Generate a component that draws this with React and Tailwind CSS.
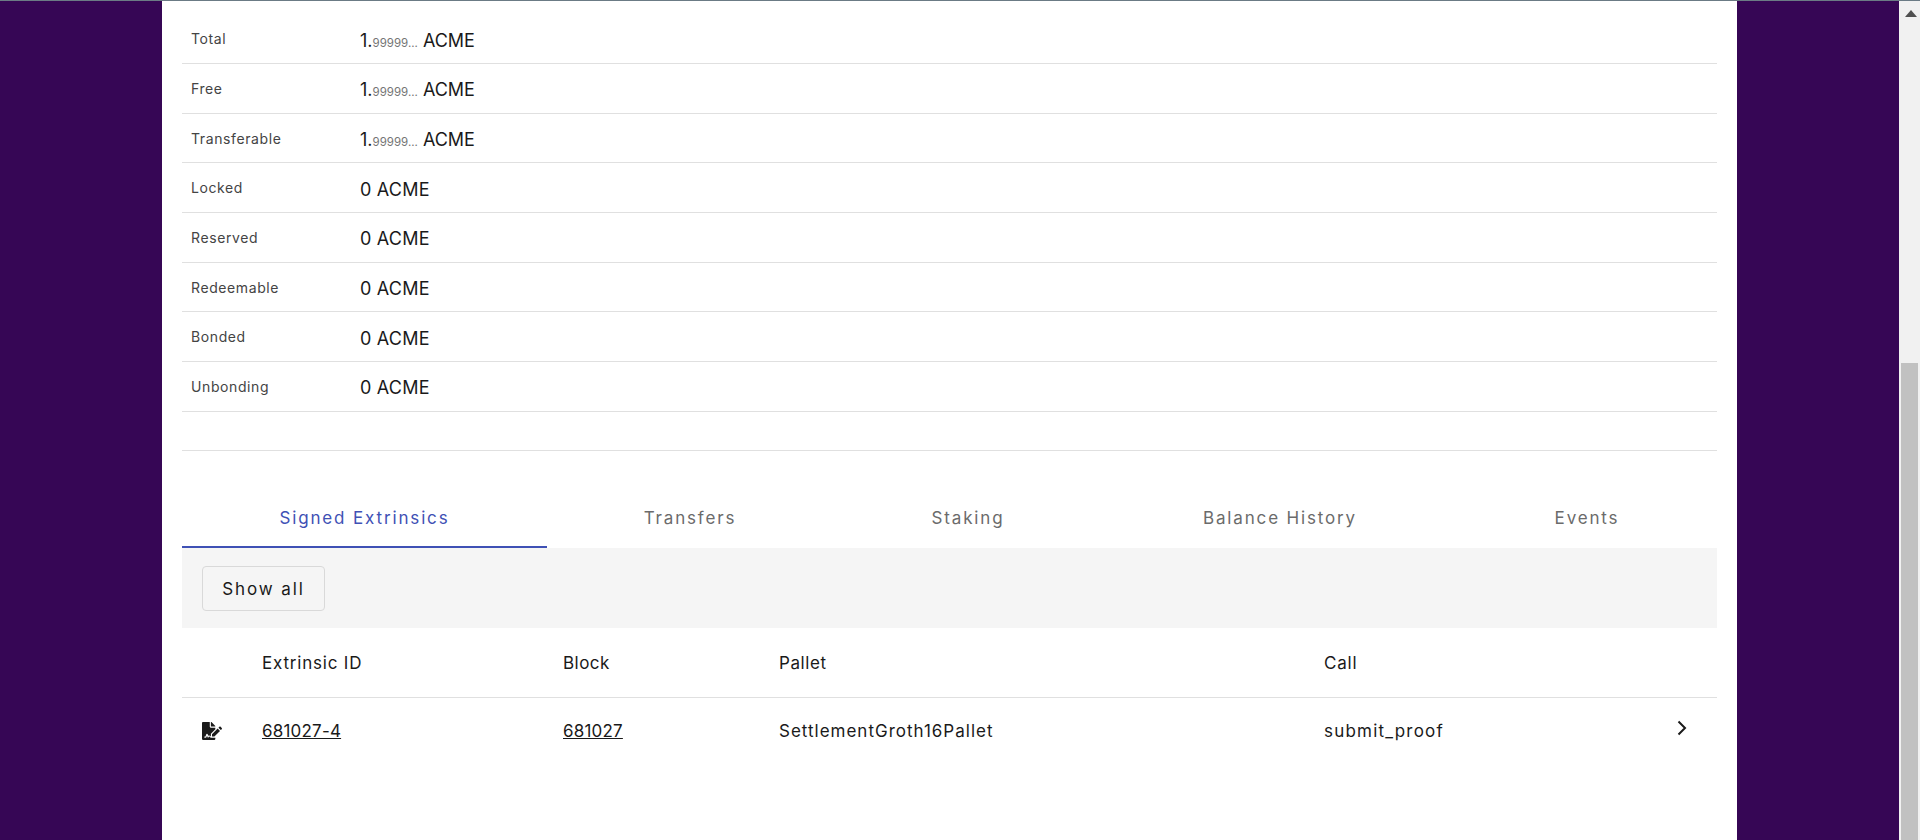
import { FaFileSignature } from 'react-icons/fa'

const BALANCES = [
  { label: 'Total', big: true },
  { label: 'Free', big: true },
  { label: 'Transferable', big: true },
  { label: 'Locked' },
  { label: 'Reserved' },
  { label: 'Redeemable' },
  { label: 'Bonded' },
  { label: 'Unbonding' },
]

const TABS = [
  { label: 'Signed Extrinsics', width: 'w-[365px]', active: true },
  { label: 'Transfers', width: 'w-[286px]' },
  { label: 'Staking', width: 'w-[270px]' },
  { label: 'Balance History', width: 'w-[354px]' },
  { label: 'Events', width: 'w-[260px]' },
]

function BalanceRow({ label, big }) {
  return (
    <div className="flex h-[49.67px] items-center border-b border-[#e0e0e0] pl-[9px]">
      <div className="w-[169px] text-[14px] tracking-[0.6px] text-[#444444]">{label}</div>
      {big ? (
        <div className="mt-[3px] text-[18px] text-[#1a1a1a]">
          1.<span className="text-[11.5px] text-[#757575]">99999...</span> ACME
        </div>
      ) : (
        <div className="mt-[3px] text-[18px] tracking-[0.2px] text-[#1a1a1a]">0 ACME</div>
      )}
    </div>
  )
}

export default function App() {
  return (
    <div className="flex h-[840px] overflow-hidden border-t border-[#6b7b85] bg-[#360655] font-['Inter',sans-serif]">
      <main className="ml-[162px] flex h-full w-[1575px] flex-col bg-white px-5 pt-[13.5px]">
        {BALANCES.map((row) => (
          <BalanceRow key={row.label} {...row} />
        ))}

        <div className="mt-[38.5px] border-b border-[#e0e0e0]" />

        {/* Tabs */}
        <div className="mt-[46px] flex h-[51px] items-center">
          {TABS.map(({ label, width, active }) => (
            <div
              key={label}
              className={`${width} flex h-full items-center justify-center border-b-2 pb-[6px] text-[17px] tracking-[1.85px] ${
                active ? 'border-[#3f51b5] text-[#3f51b5]' : 'border-transparent text-[#6b6b6b]'
              }`}
            >
              {label}
            </div>
          ))}
        </div>

        <div className="flex h-[80px] items-center bg-[#f5f5f5] px-5">
          <button className="h-[45px] w-[123px] rounded-[4px] border border-[#d9d9d9] pt-[2px] text-[17px] tracking-[1.9px] text-[#1a1a1a]">
            Show all
          </button>
        </div>

        {/* Extrinsics table */}
        <div className="flex h-[70px] items-center border-b border-[#e0e0e0] pt-[2px] text-[17px] text-[#1a1a1a]">
          <div className="w-[80px]" />
          <div className="w-[301px] tracking-[0.8px]">Extrinsic ID</div>
          <div className="w-[216px] tracking-[0.45px]">Block</div>
          <div className="w-[545px] tracking-[0.6px]">Pallet</div>
          <div className="tracking-[0.8px]">Call</div>
        </div>
        <div className="flex h-[66px] items-center text-[17px] text-[#1a1a1a]">
          <div className="w-[80px] pl-5">
            <FaFileSignature className="size-[20px] text-[#1a1a1a]" />
          </div>
          <div className="w-[301px] tracking-[0.2px] underline">681027-4</div>
          <div className="w-[216px] tracking-[0.2px] underline">681027</div>
          <div className="w-[545px] tracking-[1px]">SettlementGroth16Pallet</div>
          <div className="w-[352px] tracking-[1.2px]">submit_proof</div>
          <svg width="12" height="16" viewBox="0 0 12 16" fill="none" stroke="currentColor" strokeWidth="2" className="-mt-[6px]">
            <path d="M2.5 1.5 9 8l-6.5 6.5" />
          </svg>
        </div>
      </main>

      <div className="flex-1" />

      {/* Scrollbar */}
      <div className="relative flex h-full w-[21px] flex-col items-center bg-[#f1f1f1] pl-[2px]">
        <svg width="12" height="8" viewBox="0 0 12 8" className="mt-[9px] fill-[#505050]">
          <path d="M6 0 12 7H0z" />
        </svg>
        <div className="absolute bottom-0 left-[2px] h-[477px] w-[17px] bg-[#c1c1c1]" />
      </div>
    </div>
  )
}
